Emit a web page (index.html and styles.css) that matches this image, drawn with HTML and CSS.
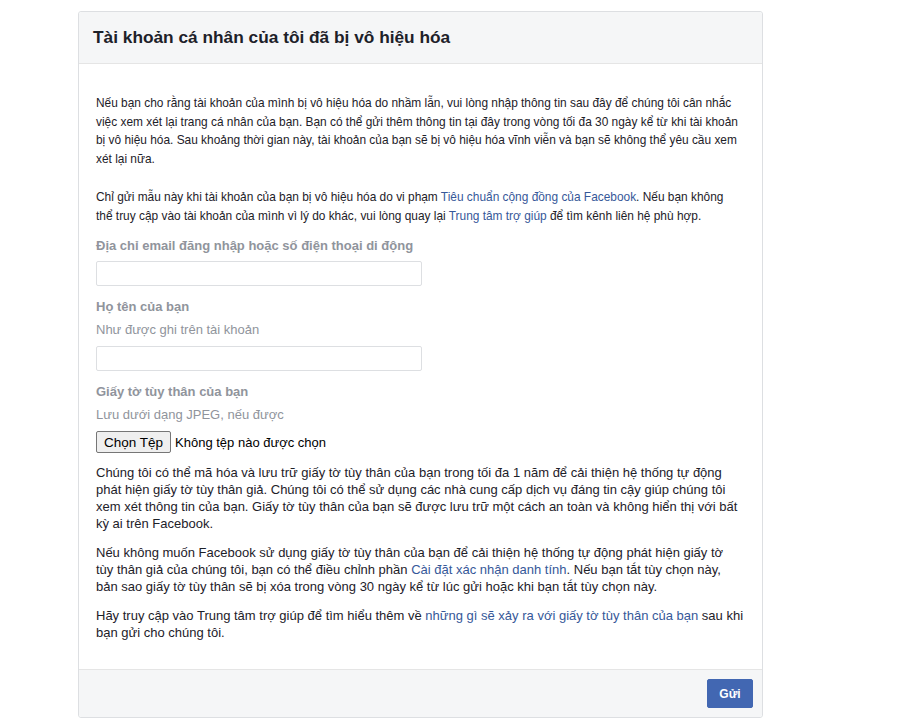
FILE: index.html
```html
<!DOCTYPE html>
<html lang="vi">
<head>
<meta charset="utf-8">
<title>Tài khoản cá nhân của tôi đã bị vô hiệu hóa</title>
<link rel="stylesheet" href="styles.css">
</head>
<body>
<div class="card">
  <div class="card-header">
    <h2 class="title">Tài khoản cá nhân của tôi đã bị vô hiệu hóa</h2>
  </div>
  <div class="card-body">
    <p class="intro">Nếu bạn cho rằng tài khoản của mình bị vô hiệu hóa do nhầm lẫn, vui lòng nhập thông tin sau đây để chúng tôi cân nhắc việc xem xét lại trang cá nhân của bạn. Bạn có thể gửi thêm thông tin tại đây trong vòng tối đa 30 ngày kể từ khi tài khoản bị vô hiệu hóa. Sau khoảng thời gian này, tài khoản của bạn sẽ bị vô hiệu hóa vĩnh viễn và bạn sẽ không thể yêu cầu xem xét lại nữa.</p>
    <p class="intro intro-2">Chỉ gửi mẫu này khi tài khoản của bạn bị vô hiệu hóa do vi phạm <a href="#">Tiêu chuẩn cộng đồng của Facebook</a>. Nếu bạn không thể truy cập vào tài khoản của mình vì lý do khác, vui lòng quay lại <a href="#">Trung tâm trợ giúp</a> để tìm kênh liên hệ phù hợp.</p>

    <div class="field">
      <label class="label">Địa chỉ email đăng nhập hoặc số điện thoại di động</label>
      <input class="text-input" type="text">
    </div>

    <div class="field">
      <label class="label">Họ tên của bạn</label>
      <div class="hint">Như được ghi trên tài khoản</div>
      <input class="text-input" type="text">
    </div>

    <div class="field">
      <label class="label">Giấy tờ tùy thân của bạn</label>
      <div class="hint">Lưu dưới dạng JPEG, nếu được</div>
      <div class="file-row">
        <button class="file-btn" type="button">Chọn Tệp</button>
        <span class="file-name">Không tệp nào được chọn</span>
      </div>
    </div>

    <div class="notes">
      <p class="note">Chúng tôi có thể mã hóa và lưu trữ giấy tờ tùy thân của bạn trong tối đa 1 năm để cải thiện hệ thống tự động phát hiện giấy tờ tùy thân giả. Chúng tôi có thể sử dụng các nhà cung cấp dịch vụ đáng tin cậy giúp chúng tôi xem xét thông tin của bạn. Giấy tờ tùy thân của bạn sẽ được lưu trữ một cách an toàn và không hiển thị với bất kỳ ai trên Facebook.</p>
      <p class="note">Nếu không muốn Facebook sử dụng giấy tờ tùy thân của bạn để cải thiện hệ thống tự động phát hiện giấy tờ tùy&nbsp;thân giả của chúng tôi, bạn có thể điều chỉnh phần <a href="#">Cài đặt xác nhận danh tính</a>. Nếu bạn tắt tùy chọn này, bản sao giấy tờ tùy thân sẽ bị xóa trong vòng 30 ngày kể từ lúc gửi hoặc khi bạn tắt tùy chọn này.</p>
      <p class="note">Hãy truy cập vào Trung tâm trợ giúp để tìm hiểu thêm về <a href="#">những gì sẽ xảy ra với giấy tờ tùy thân của bạn</a> sau khi bạn gửi cho chúng tôi.</p>
    </div>
  </div>
  <div class="card-footer">
    <button class="submit" type="button">Gửi</button>
  </div>
</div>
</body>
</html>
```

FILE: styles.css
```css
html, body {
  margin: 0;
  padding: 0;
  background: #ffffff;
}

body {
  font-family: "Liberation Sans", Arial, sans-serif;
  color: #1d2129;
  padding: 11px 0 0 78px;
}

.card {
  width: 683px;
  border: 1px solid #dddfe2;
  border-radius: 3px;
  background: #ffffff;
}

.card-header {
  height: 51px;
  background: #f5f6f7;
  border-bottom: 1px solid #e5e5e5;
  border-radius: 3px 3px 0 0;
  display: flex;
  align-items: center;
  padding: 0 14px;
}

.title {
  margin: 0;
  font-size: 17.3px;
  font-weight: bold;
  color: #1d2129;
}

.card-body {
  padding: 30px 12px 28px 17px;
}

a {
  color: #365899;
  text-decoration: none;
}

.intro {
  margin: 0;
  font-size: 11.9px;
  line-height: 18.5px;
}

.intro-2 {
  margin-top: 20px;
  max-width: 640px;
}

.field {
  margin-top: 12px;
}

.label {
  display: block;
  font-size: 13px;
  font-weight: bold;
  color: #90949c;
  line-height: 18px;
  margin-bottom: 6px;
}

.hint {
  font-size: 13px;
  color: #90949c;
  line-height: 18px;
  margin-top: -1px;
  margin-bottom: 7px;
}

.text-input {
  display: block;
  box-sizing: border-box;
  width: 326px;
  height: 25px;
  border: 1px solid #dddfe2;
  border-radius: 2px;
  margin: 0;
  padding: 3px;
  font: inherit;
}

.file-row {
  display: flex;
  align-items: center;
  gap: 4px;
  margin-top: 6px;
}

.file-btn {
  font-family: "Liberation Sans", Arial, sans-serif;
  font-size: 13.5px;
  color: #000000;
  background: #efefef;
  border: 1px solid #767676;
  border-radius: 2px;
  padding: 1px 7px;
  height: 22px;
}

.file-name {
  font-size: 13px;
  color: #000000;
}

.notes {
  max-width: 650px;
  margin-top: 11px;
}

.note {
  margin: 0;
  font-size: 13px;
  line-height: 17px;
}

.note + .note {
  margin-top: 12px;
}

.card-footer {
  background: #f5f6f7;
  border-top: 1px solid #e5e5e5;
  border-radius: 0 0 3px 3px;
  height: 47px;
  display: flex;
  align-items: center;
  justify-content: flex-end;
  padding: 0 9px;
}

.submit {
  font-family: "Liberation Sans", Arial, sans-serif;
  font-size: 12px;
  font-weight: bold;
  color: #ffffff;
  background: #4267b2;
  border: 1px solid #4267b2;
  border-radius: 2px;
  width: 46px;
  height: 29px;
  padding: 0;
}
```
